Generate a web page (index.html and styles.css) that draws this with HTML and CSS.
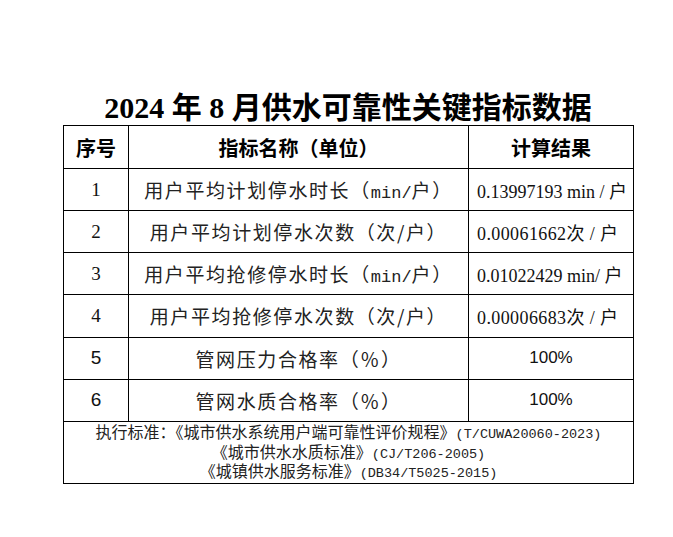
FILE: index.html
```html
<!DOCTYPE html>
<html lang="zh-CN">
<head>
<meta charset="utf-8">
<title>2024年8月供水可靠性关键指标数据</title>
<link rel="stylesheet" href="styles.css">
</head>
<body>
<div class="page">
  <h1 class="title">2024 年 8 月供水可靠性关键指标数据</h1>
  <table class="data">
    <colgroup>
      <col class="c-no">
      <col class="c-name">
      <col class="c-val">
    </colgroup>
    <thead>
      <tr class="head">
        <th>序号</th>
        <th>指标名称（单位）</th>
        <th>计算结果</th>
      </tr>
    </thead>
    <tbody>
      <tr>
        <td class="no">1</td>
        <td class="name">用户平均计划停水时长（<span class="lat">min/</span>户）</td>
        <td class="val">0.13997193 min / 户</td>
      </tr>
      <tr>
        <td class="no">2</td>
        <td class="name">用户平均计划停水次数（次/户）</td>
        <td class="val wide">0.00061662次 / 户</td>
      </tr>
      <tr>
        <td class="no">3</td>
        <td class="name">用户平均抢修停水时长（<span class="lat">min/</span>户）</td>
        <td class="val">0.01022429 min/ 户</td>
      </tr>
      <tr class="tall">
        <td class="no">4</td>
        <td class="name">用户平均抢修停水次数（次/户）</td>
        <td class="val wide">0.00006683次 / 户</td>
      </tr>
      <tr class="sans">
        <td class="no">5</td>
        <td class="name">管网压力合格率（％）</td>
        <td class="pct">100%</td>
      </tr>
      <tr class="sans">
        <td class="no">6</td>
        <td class="name">管网水质合格率（％）</td>
        <td class="pct">100%</td>
      </tr>
      <tr class="foot">
        <td colspan="3">
          <div class="fl">执行标准：《城市供水系统用户端可靠性评价规程》<span class="asc">(T/CUWA20060-2023)</span></div>
          <div class="fl">《城市供水水质标准》<span class="asc">(CJ/T206-2005)</span></div>
          <div class="fl">《城镇供水服务标准》<span class="asc">(DB34/T5025-2015)</span></div>
        </td>
      </tr>
    </tbody>
  </table>
</div>
</body>
</html>
```

FILE: styles.css
```css
html, body {
  margin: 0;
  padding: 0;
  background: #ffffff;
}

.page {
  padding: 90px 0 0 63px;
  width: 570px;
}

.title {
  margin: 0;
  height: 35px;
  line-height: 35px;
  text-align: center;
  font-family: "Liberation Serif", "Noto Sans CJK SC", serif;
  font-weight: bold;
  font-size: 30px;
  color: #000;
  white-space: nowrap;
}

.data {
  width: 570px;
  border-collapse: collapse;
  table-layout: fixed;
  color: #111;
}

.c-no { width: 65px; }
.c-name { width: 340px; }
.c-val { width: 165px; }

.data th,
.data td {
  border: 1px solid #000;
  padding: 0;
  height: 41px;
  vertical-align: middle;
}

.head th {
  height: 42px;
  font-family: "Liberation Serif", "Noto Sans CJK SC", serif;
  font-weight: bold;
  font-size: 20px;
  color: #000;
  text-align: center;
}

.no {
  text-align: center;
  font-family: "Liberation Serif", serif;
  font-size: 19px;
}

.name {
  text-align: center;
  font-family: "Noto Sans CJK SC", sans-serif;
  font-size: 19px;
  letter-spacing: 1.6px;
  color: #222;
  white-space: nowrap;
}

.lat {
  font-family: "Liberation Mono", monospace;
  font-size: 17px;
  letter-spacing: 0;
}

.val {
  padding-left: 8px !important;
  font-family: "Liberation Serif", "Noto Sans CJK SC", serif;
  font-size: 18px;
  white-space: nowrap;
}

.val.wide {
  letter-spacing: 0.4px;
}

.tall td {
  height: 41.5px;
}

.sans .no,
.sans .pct {
  font-family: "Liberation Sans", sans-serif;
}

.sans .no {
  font-size: 19px;
}

.pct {
  text-align: center;
  font-size: 17px;
}

.foot td {
  height: 60px;
  padding-bottom: 1px;
  text-align: center;
  font-family: "Noto Sans CJK SC", sans-serif;
  font-size: 16px;
  color: #222;
  white-space: nowrap;
}

.fl {
  height: 19.5px;
  line-height: 19.5px;
}

.asc {
  font-family: "Liberation Mono", monospace;
  font-size: 13.5px;
  line-height: 1;
}
```
